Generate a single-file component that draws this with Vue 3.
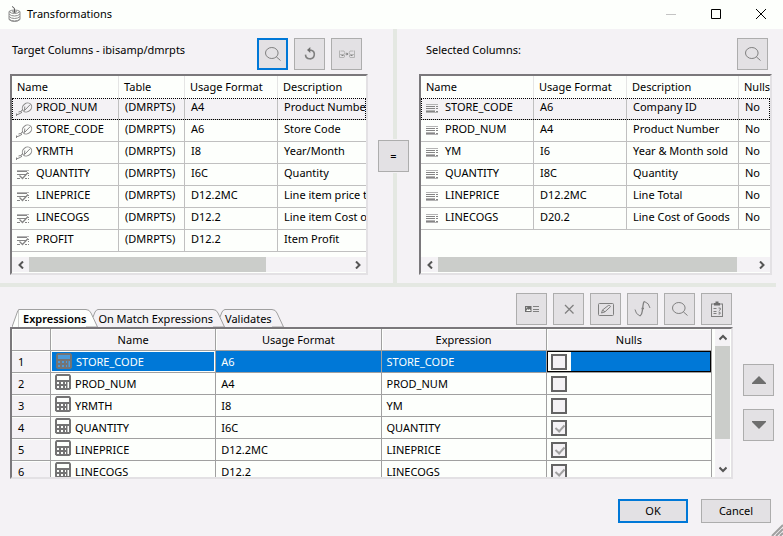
<script setup>
import { ref } from 'vue'

const panes = [
  {
    id: 'target',
    title: 'Target Columns - ibisamp/dmrpts',
    tools: [
      { icon: 'search', label: 'Find column', primary: true },
      { icon: 'refresh', label: 'Refresh' },
      { icon: 'automap', label: 'Map columns' },
    ],
    cols: [
      { label: 'Name', w: 107 },
      { label: 'Table', w: 66 },
      { label: 'Usage Format', w: 93 },
      { label: 'Description' },
    ],
    rows: [
      { icon: 'key', cells: ['PROD_NUM', '(DMRPTS)', 'A4', 'Product Number'] },
      { icon: 'key', cells: ['STORE_CODE', '(DMRPTS)', 'A6', 'Store Code'] },
      { icon: 'key', cells: ['YRMTH', '(DMRPTS)', 'I8', 'Year/Month'] },
      { icon: 'measure', cells: ['QUANTITY', '(DMRPTS)', 'I6C', 'Quantity'] },
      { icon: 'measure', cells: ['LINEPRICE', '(DMRPTS)', 'D12.2MC', 'Line item price total'] },
      { icon: 'measure', cells: ['LINECOGS', '(DMRPTS)', 'D12.2', 'Line item Cost of Goods'] },
      { icon: 'measure', cells: ['PROFIT', '(DMRPTS)', 'D12.2', 'Item Profit'] },
    ],
    thumb: 74,
  },
  {
    id: 'selected',
    title: 'Selected Columns:',
    tools: [{ icon: 'search', label: 'Find column' }],
    cols: [
      { label: 'Name', w: 113 },
      { label: 'Usage Format', w: 93 },
      { label: 'Description', w: 112 },
      { label: 'Nulls' },
    ],
    rows: [
      { icon: 'column', cells: ['STORE_CODE', 'A6', 'Company ID', 'No'] },
      { icon: 'column', cells: ['PROD_NUM', 'A4', 'Product Number', 'No'] },
      { icon: 'column', cells: ['YM', 'I6', 'Year & Month sold', 'No'] },
      { icon: 'column', cells: ['QUANTITY', 'I8C', 'Quantity', 'No'] },
      { icon: 'column', cells: ['LINEPRICE', 'D12.2MC', 'Line Total', 'No'] },
      { icon: 'column', cells: ['LINECOGS', 'D20.2', 'Line Cost of Goods', 'No'] },
    ],
    thumb: 95,
  },
]

const tabs = ['Expressions', 'On Match Expressions', 'Validates']
const activeTab = ref('Expressions')

const expressionTools = [
  { icon: 'insert', label: 'Insert columns' },
  { icon: 'delete', label: 'Delete' },
  { icon: 'edit', label: 'Edit' },
  { icon: 'function', label: 'Functions' },
  { icon: 'search', label: 'Find' },
  { icon: 'validate', label: 'Test expressions' },
]

const selected = ref(0)
const expressions = ref([
  { name: 'STORE_CODE', format: 'A6', expression: 'STORE_CODE', nulls: false },
  { name: 'PROD_NUM', format: 'A4', expression: 'PROD_NUM', nulls: false },
  { name: 'YRMTH', format: 'I8', expression: 'YM', nulls: false },
  { name: 'QUANTITY', format: 'I6C', expression: 'QUANTITY', nulls: true },
  { name: 'LINEPRICE', format: 'D12.2MC', expression: 'LINEPRICE', nulls: true },
  { name: 'LINECOGS', format: 'D12.2', expression: 'LINECOGS', nulls: true },
])
</script>

<template>
  <!-- Icon definitions shared by the toolbars and tables -->
  <svg class="sprite" aria-hidden="true">
    <symbol id="i-search" viewBox="0 0 18 18">
      <ellipse cx="7.8" cy="8" rx="6.3" ry="5.5" />
      <path d="M12.3 11.8 16.5 15.5" />
    </symbol>
    <symbol id="i-refresh" viewBox="0 0 18 18">
      <path class="bold" d="M8.5 5.2h1.6a4.4 4.4 0 1 1-5.6 4.4" />
      <path class="solid" d="M9.3 2v6L6 5.100z" />
    </symbol>
    <symbol id="i-automap" viewBox="0 0 18 18">
      <path class="pale" d="M1.500 5.500v7H6q1.500-1.500 0-3 1.500-2 0-3.500H2.500M2 9.500h4M16.500 5.500v7H12q-1.500-1.500 0-3-1.500-2 0-3.500h3.500M16 9.500h-4" />
      <path d="M3.500 10.500h2M12.500 10.500h2M7.500 9h1" />
      <path class="solid" d="M8.500 7.500 10.500 9l-2 1.500z" />
    </symbol>
    <symbol id="i-insert" viewBox="0 0 18 18">
      <path class="solid" d="M2 6h6.500v6H2z" />
      <path class="hole" d="m3 11 1.800-2 1 .9L6.800 9l1 2zM3.200 7.200h1v1h-1z" />
      <path d="M10 6.500h6M10 9.500h6M10 11.500h6" />
    </symbol>
    <symbol id="i-delete" viewBox="0 0 18 18">
      <path class="mid" d="m5 5 8.500 8.500M13.500 5 5 13.500" />
    </symbol>
    <symbol id="i-edit" viewBox="0 0 18 18">
      <rect x="1.500" y="3.500" width="15" height="12" rx="1" />
      <path d="m4.500 13 1-3 5.800-4.500q1.700-.6 2.200 1.200L8 11.800zM5.500 10 8 11.800" />
    </symbol>
    <symbol id="i-function" viewBox="0 0 18 18">
      <path class="mid" d="M6 16q2-1.500 2.300-5L9 5.500q.3-3 1.500-4.200M7.500 8.500H10" />
      <path d="M1 9.500q.5 4.500 5 6.500M10.500 1.500q4.500 1.500 5.500 6.500" />
    </symbol>
    <symbol id="i-validate" viewBox="0 0 18 18">
      <rect x="3.500" y="4" width="11" height="12.500" />
      <path class="solid" d="M6 3h1.500V1.500h3V3H12v2.500H6z" />
      <path d="M5.500 8.500h3M5.500 11.500h3M5.500 13.500h3M10.500 8q2.500-.5 2 1.500l-1.500 1M10.500 12q2.500 0 1.500 2h-1.500" />
    </symbol>
    <symbol id="i-key" viewBox="0 0 18 16">
      <ellipse cx="12" cy="6.500" rx="5" ry="4.200" transform="rotate(-40 12 6.500)" />
      <path d="M15.300 3.500 9.500 9.500l.3-4M8 8.500 5.500 10.500l1.500.8L4 13l-2.500.8M1.500 12.500V15M5.500 10.500l-2 .5" />
    </symbol>
    <symbol id="i-measure" viewBox="0 0 13 11">
      <path class="pale" d="M0 1.500h12" />
      <path d="M0 2.500h10M0 5.500h9" />
      <path class="mid" d="m2.500 6.500 3 3 5.500-6" />
      <path d="M0 9.500h3M8 9.500h2M11.500 4v1M11.500 6v1M11.500 9v1" />
    </symbol>
    <symbol id="i-column" viewBox="0 0 13 9">
      <path class="pale" d="M0 .5h12M0 6.500h9M0 8.500h12" />
      <path d="M0 2.500h9M0 4.500h9M0 7.500h9M10 2.500h2M10 4.500h2M10 7.500h2" />
    </symbol>
    <symbol id="i-calc" viewBox="0 0 16 16">
      <path class="body" d="M1.500 0h13L16 1.500v13L14.500 16h-13L0 14.500v-13z" />
      <path class="hole" d="M2 2h12v4H2zM2 8h2v2H2zM6 8h2v2H6zM10 8h1v2h-1zM2 12h2v2H2zM6 12h2v2H6zM10 12h1v2h-1zM12.500 8H14v6h-1.500z" />
    </symbol>
  </svg>

  <main class="dialog">
    <header class="titlebar">
      <svg class="app-icon" viewBox="0 0 13 16" aria-hidden="true">
        <path d="M1 5.500v8q2 2 5.500 2t5.500-2v-8q-2 2-5.500 2T1 5.500q2-1.500 5.500-1.500T12 5.500" />
        <path d="M1 8q2 2 5.500 2T12 8M1 10.500q2 2 5.500 2t5.500-2M1 13q2 2 5.500 2t5.500-2" />
        <path class="dark" d="M6.500 6.500V3q0-1.500-2.500-2.500M4.500 5 6.500 7l2-2" />
      </svg>
      <h1>Transformations</h1>
      <div class="window-controls">
        <button type="button" class="faded" aria-label="Minimize" disabled>
          <svg viewBox="0 0 10 10"><path d="M0 5.500h10" /></svg>
        </button>
        <button type="button" aria-label="Maximize">
          <svg viewBox="0 0 10 10"><path d="M.5.5h9v9h-9z" /></svg>
        </button>
        <button type="button" aria-label="Close">
          <svg viewBox="0 0 10 10"><path d="m0 0 10 10M10 0 0 10" /></svg>
        </button>
      </div>
    </header>

    <div class="split">
      <section v-for="pane in panes" :key="pane.id" class="pane" :class="pane.id">
        <button v-if="pane.id === 'selected'" type="button" class="tool equals">=</button>
        <div class="pane-head">
          <h2>{{ pane.title }}</h2>
          <div class="tools">
            <button
              v-for="tool in pane.tools"
              :key="tool.icon"
              type="button"
              class="tool"
              :class="{ primary: tool.primary }"
              :aria-label="tool.label"
            >
              <svg class="glyph"><use :href="'#i-' + tool.icon" /></svg>
            </button>
          </div>
        </div>
        <div class="sunken list-box">
          <div class="list-view">
            <table class="list">
              <colgroup>
                <col v-for="col in pane.cols" :key="col.label" :style="col.w ? { width: col.w + 'px' } : null" />
              </colgroup>
              <thead>
                <tr>
                  <th v-for="col in pane.cols" :key="col.label" scope="col">{{ col.label }}</th>
                </tr>
              </thead>
              <tbody>
                <tr v-for="(row, r) in pane.rows" :key="r" :class="{ focused: r === 0 }">
                  <td v-for="(cell, c) in row.cells" :key="c" :class="{ named: c === 0 }">
                    <div v-if="c === 0" class="name">
                      <svg class="row-icon" :class="row.icon"><use :href="'#i-' + row.icon" /></svg>
                      <span>{{ cell }}</span>
                    </div>
                    <template v-else>{{ cell }}</template>
                  </td>
                </tr>
              </tbody>
            </table>
          </div>
          <div class="hscroll">
            <button type="button" aria-label="Scroll left">
              <svg viewBox="0 0 8 8"><path d="M6 .500 2.500 4 6 7.500" /></svg>
            </button>
            <div class="track"><div class="thumb" :style="{ width: pane.thumb + '%' }"></div></div>
            <button type="button" aria-label="Scroll right">
              <svg viewBox="0 0 8 8"><path d="M2 .500 5.500 4 2 7.500" /></svg>
            </button>
          </div>
        </div>
      </section>
    </div>

    <div class="splitter"></div>

    <section class="lower">
      <div class="bar">
        <div class="tabs" role="tablist">
          <button
            v-for="tab in tabs"
            :key="tab"
            type="button"
            role="tab"
            class="tab"
            :class="{ active: tab === activeTab }"
            :aria-selected="tab === activeTab"
            @click="activeTab = tab"
          >
            <svg class="edge left" viewBox="0 0 7 18" aria-hidden="true">
              <path v-if="tab === activeTab" d="M0 18 5 4Q6 .500 7 .500V18" />
              <path v-else d="M2 8 4 3Q5.500 .500 7 .500" />
            </svg>
            <span class="tab-label">{{ tab }}</span>
            <svg class="edge right" viewBox="0 0 12 18" aria-hidden="true">
              <path d="M0 .500Q3.500 .500 5 4L11.500 18H0" />
            </svg>
          </button>
        </div>
        <div class="tools">
          <button
            v-for="tool in expressionTools"
            :key="tool.icon"
            type="button"
            class="tool"
            :aria-label="tool.label"
          >
            <svg class="glyph"><use :href="'#i-' + tool.icon" /></svg>
          </button>
        </div>
      </div>

      <div class="work">
        <div class="sunken grid-box">
          <div class="grid-view">
            <table class="grid">
              <colgroup>
                <col class="num-col" />
                <col /><col /><col /><col />
              </colgroup>
              <thead>
                <tr>
                  <td class="corner"></td>
                  <th scope="col">Name</th>
                  <th scope="col">Usage Format</th>
                  <th scope="col">Expression</th>
                  <th scope="col">Nulls</th>
                </tr>
              </thead>
              <tbody>
                <tr
                  v-for="(row, i) in expressions"
                  :key="row.name"
                  :class="{ current: i === selected }"
                  @click="selected = i"
                >
                  <th scope="row">{{ i + 1 }}</th>
                  <td class="named">
                    <div class="name">
                      <svg class="calc"><use href="#i-calc" /></svg>
                      <span>{{ row.name }}</span>
                    </div>
                  </td>
                  <td>{{ row.format }}</td>
                  <td>{{ row.expression }}</td>
                  <td class="nulls">
                    <label class="check">
                      <input v-model="row.nulls" type="checkbox" :aria-label="'Nulls for ' + row.name" />
                    </label>
                  </td>
                </tr>
              </tbody>
            </table>
          </div>
          <div class="vscroll">
            <button type="button" aria-label="Scroll up">
              <svg viewBox="0 0 8 8"><path d="M.500 5.500 4 2l3.500 3.500" /></svg>
            </button>
            <div class="vtrack"><div class="vthumb"></div></div>
            <button type="button" aria-label="Scroll down">
              <svg viewBox="0 0 8 8"><path d="M.500 2.500 4 6l3.500-3.500" /></svg>
            </button>
          </div>
        </div>
        <div class="order">
          <button type="button" class="tool" aria-label="Move up">
            <svg class="arrow" viewBox="0 0 14 8"><path d="M7 0 14 7v1H0V7z" /></svg>
          </button>
          <button type="button" class="tool" aria-label="Move down">
            <svg class="arrow" viewBox="0 0 14 8"><path d="M0 0h14v1L7 8 0 1z" /></svg>
          </button>
        </div>
      </div>
    </section>

    <footer class="actions">
      <button type="button" class="push primary">OK</button>
      <button type="button" class="push">Cancel</button>
      <svg class="grip" viewBox="0 0 12 12" aria-hidden="true">
        <path d="M1 12 12 1M5 12l7-7M9 12l3-3" />
      </svg>
    </footer>
  </main>
</template>

<style>
body {
  margin: 0;
  background: #f4f2f5;
}
</style>

<style scoped>
* {
  box-sizing: border-box;
}
.sprite {
  position: absolute;
  width: 0;
  height: 0;
}
.dialog {
  position: relative;
  display: flex;
  flex-direction: column;
  min-height: 100vh;
  background: #f4f2f5;
  color: #000;
  font: 11px/18px "Noto Sans", "Open Sans", sans-serif;
}
button {
  font: inherit;
  color: inherit;
  padding: 0;
  border: 0;
  background: none;
}
h1,
h2 {
  margin: 0;
  font-size: inherit;
  font-weight: 400;
}

/* Title bar */
.titlebar {
  display: flex;
  align-items: center;
  height: 29px;
  padding: 0 0 2px 8px;
  gap: 6px;
  background: #fdfffc;
}
.app-icon {
  width: 13px;
  height: 16px;
  fill: none;
  stroke: #8c8c8c;
}
.app-icon .dark {
  stroke: #5a5a5a;
}
.window-controls {
  display: flex;
  margin-left: auto;
}
.window-controls button {
  display: grid;
  place-items: center;
  width: 45px;
  height: 27px;
}
.window-controls svg {
  width: 10px;
  height: 10px;
  fill: none;
  stroke: #000;
}
.window-controls .faded svg {
  stroke: #c4c4c4;
}

/* Column panes */
.split {
  display: grid;
  grid-template-columns: 393fr 390fr;
}
.pane {
  position: relative;
  display: flex;
  flex-direction: column;
  min-width: 0;
  padding: 9px 25px 8px 10px;
}
.pane.selected {
  padding-left: 22px;
  padding-right: 11px;
  border-left: 4px solid #e4e8e2;
}
.pane-head {
  display: flex;
  justify-content: space-between;
  padding: 0 6px 4px 2px;
}
.selected .pane-head {
  padding: 0 4px 4px 7px;
}
h2 {
  line-height: 24px;
  white-space: nowrap;
}
.tools {
  display: flex;
  gap: 6px;
}
.tool {
  display: grid;
  place-items: center;
  width: 31px;
  height: 32px;
  border: 1px solid #adadad;
  background: #e3e1e4;
}
.tool.primary,
.push.primary {
  border: 2px solid #0078d7;
}
.equals {
  position: absolute;
  left: -19px;
  top: 111px;
  box-shadow: 0 0 0 1px #f4f2f5;
}
.glyph {
  width: 18px;
  height: 18px;
  fill: none;
  stroke: #808080;
}
.mid {
  stroke-width: 1.3;
}
.bold {
  stroke-width: 1.6;
}
.pale {
  stroke: #b4b4b4;
}
.solid {
  fill: #6e6e6e;
  stroke: none;
}
.hole {
  fill: currentColor;
  stroke: none;
}
.body {
  fill: #747474;
  stroke: none;
}
.glyph,
.calc {
  color: #fdfffc;
}

.sunken {
  display: flex;
  flex-direction: column;
  border: 2px solid;
  border-color: #7a787b #e3e1e4 #e3e1e4 #7a787b;
  background: #fdfffc;
}
.list-box {
  padding-bottom: 1px;
}
.list-view {
  min-height: 181px;
  overflow: hidden;
}
table {
  width: 100%;
  table-layout: fixed;
  border-collapse: separate;
  border-spacing: 0;
}
th,
td {
  overflow: hidden;
  white-space: nowrap;
  font-weight: 400;
  text-align: left;
}
.list th {
  padding: 0 0 0 5px;
  line-height: 22px;
  border-right: 1px solid #e5e5e5;
}
.list td {
  padding: 0 0 3px 6px;
  border-right: 1px solid #c0c0c0;
  border-bottom: 1px solid #c0c0c0;
}
.list th:last-child,
.list td:last-child {
  border-right: 0;
}
.list td.named {
  padding-left: 3px;
}
.list .focused td {
  background: #f4f2f5;
}
.list .focused {
  outline: 1px dotted #000;
  outline-offset: -1px;
}
.name {
  display: flex;
  height: 18px;
}
.row-icon {
  flex: none;
  margin-right: 3px;
  fill: none;
  stroke: #858585;
}
.row-icon.key {
  width: 18px;
  height: 16px;
  margin-top: 3px;
}
.row-icon.measure {
  width: 13px;
  height: 11px;
  margin: 5px 6px 0 2px;
}
.row-icon.column {
  width: 13px;
  height: 9px;
  margin: 6px 6px 0 2px;
}

.hscroll {
  display: flex;
  height: 15px;
  background: #f4f2f5;
}
.hscroll button,
.vscroll button {
  display: grid;
  place-items: center;
  flex: none;
  width: 17px;
  height: 15px;
}
.hscroll svg,
.vscroll svg {
  width: 8px;
  height: 8px;
  fill: none;
  stroke: #555;
  stroke-width: 2;
}
.track {
  flex: 1;
}
.thumb {
  height: 15px;
  background: #cbcdca;
}

.splitter {
  height: 4px;
  margin-right: 7px;
  background: #e4e8e2;
}

/* Expressions area */
.lower {
  padding: 6px 9px 0 10px;
}
.bar {
  display: flex;
  justify-content: space-between;
  align-items: flex-end;
  margin-right: 42px;
}
.bar .tools {
  padding-bottom: 2px;
}
.tabs {
  display: flex;
  padding-left: 2px;
}
.tab {
  position: relative;
  display: flex;
  height: 18px;
}
.tab + .tab {
  margin-left: -7px;
}
.tab.active {
  font-weight: 600;
}
.tab-label {
  position: relative;
  z-index: 1;
  height: 18px;
  line-height: 17px;
  border-top: 1px solid #a0a0a0;
}
.active .tab-label {
  padding-left: 4px;
  background: #fdfffc;
}
.edge {
  flex: none;
  height: 18px;
  fill: none;
  stroke: #a0a0a0;
}
.edge.left {
  width: 7px;
}
.edge.right {
  width: 12px;
}
.active .edge {
  fill: #fdfffc;
}
.work {
  display: flex;
  gap: 10px;
}
.grid-box {
  flex: 1;
  flex-direction: row;
  gap: 3px;
  padding-right: 1px;
  min-width: 0;
}
.grid-view {
  flex: 1;
  min-width: 0;
  max-height: 148px;
  overflow: hidden;
}
.num-col {
  width: 39px;
}
.grid thead th,
.corner {
  height: 22px;
  padding: 0;
  line-height: 20px;
  text-align: center;
  background: #f4f2f5;
  border-right: 1px solid #a0a0a0;
  border-bottom: 1px solid #a0a0a0;
  box-shadow: inset 1px 1px #fdfffc;
}
.grid tbody th {
  padding: 0 0 0 6px;
  line-height: 21px;
  background: #f4f2f5;
  border-right: 1px solid #a0a0a0;
  border-bottom: 1px solid #a0a0a0;
  box-shadow: inset 0 1px #fdfffc;
}
.grid tbody td {
  padding: 0 0 0 5px;
  line-height: 21px;
  border-right: 1px solid #a0a0a0;
  border-bottom: 1px solid #a0a0a0;
}
.grid .name {
  height: 21px;
  gap: 4px;
}
.calc {
  flex: none;
  width: 16px;
  height: 16px;
  margin-top: 1px;
}
.grid tbody .named {
  padding-left: 4px;
}
.grid tbody .current td {
  background: #0078d7;
  color: #fdfffc;
}
.current .named {
  box-shadow: inset 0 0 0 1px #fdfffc;
}
.current .calc {
  margin: 2px 0 0 1px;
  color: #4c9ad8;
}
.grid tbody td.nulls {
  padding: 0;
}
.current .nulls {
  box-shadow: inset 0 0 0 1px #000;
}
.check {
  display: flex;
  align-items: center;
  width: 24px;
  height: 21px;
  padding-left: 4px;
}
.current .check {
  background: #fdfffc;
  border: 1px solid #000;
  border-right: 0;
  padding-left: 3px;
}
.check input {
  position: relative;
  appearance: none;
  width: 16px;
  height: 16px;
  margin: 0;
  border: 2px solid #646464;
  background: #f4f2f5;
}
.check input:checked::after {
  content: "";
  position: absolute;
  left: 4px;
  top: 1px;
  width: 4px;
  height: 7px;
  border: solid #a0a0a0;
  border-width: 0 2px 2px 0;
  transform: rotate(42deg);
}
.vscroll {
  display: flex;
  flex-direction: column;
  width: 15px;
  background: #f4f2f5;
}
.vscroll button {
  width: 15px;
  height: 17px;
}
.vtrack {
  flex: 1;
}
.vthumb {
  height: 82%;
  background: #cbcdca;
}
.order {
  display: flex;
  flex-direction: column;
  gap: 13px;
  padding-top: 37px;
}
.arrow {
  width: 14px;
  height: 8px;
  fill: #6e6e6e;
}

/* Footer */
.actions {
  display: flex;
  justify-content: flex-end;
  gap: 13px;
  padding: 20px 12px 13px;
}
.push {
  width: 70px;
  height: 24px;
  border: 1px solid #adadad;
  background: #e3e1e4;
}
.grip {
  position: absolute;
  right: 0;
  bottom: 0;
  width: 12px;
  height: 12px;
  fill: none;
  stroke: #a0a0a0;
  stroke-width: 2;
}
</style>
